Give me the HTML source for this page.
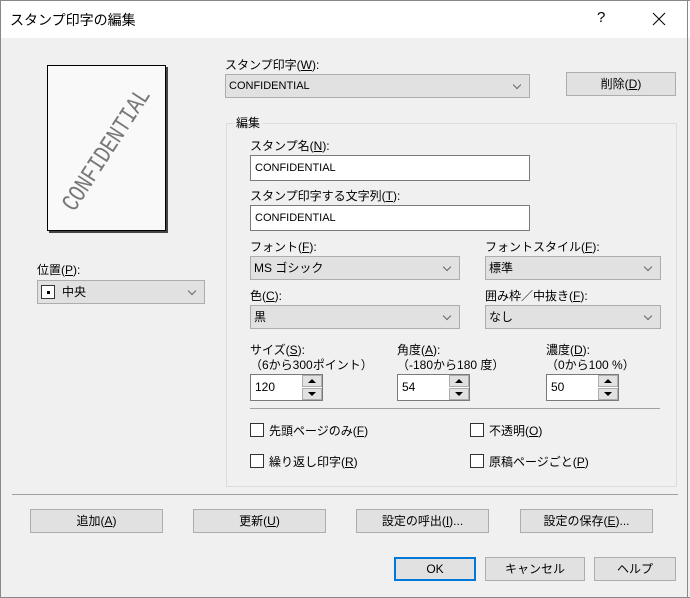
<!DOCTYPE html><html><head><meta charset="utf-8"><style>
*{margin:0;padding:0;box-sizing:border-box}
body{width:690px;height:598px;background:#f0f0f0;font-family:"Liberation Sans","Noto Sans CJK JP",sans-serif;font-size:12px;color:#000;position:relative;overflow:hidden}
.a{position:absolute;white-space:nowrap}
.lbl{position:absolute;white-space:nowrap;font-size:12px;line-height:14px}
.cb{position:absolute;background:#e1e1e1;border:1px solid #adadad;height:24px;line-height:22px;padding-left:3px;font-size:12px}
.cb:after{content:"";position:absolute;right:9px;top:7px;width:5px;height:5px;border-right:1px solid #666;border-bottom:1px solid #666;transform:rotate(45deg)}
.in{position:absolute;background:#fff;border:1px solid #7a7a7a;height:26px;line-height:24px;padding-left:4px;font-size:11px}
.btn{position:absolute;background:#e1e1e1;border:1px solid #adadad;height:24px;line-height:22px;text-align:center;font-size:12px}
.sp{position:absolute;background:#fff;border:1px solid #7a7a7a;width:73px;height:27px;line-height:25px;padding-left:4px;font-size:12px}
.sp i{position:absolute;right:0;width:20px;height:12px;background:#e1e1e1;border:1px solid #adadad}
.sp i:after{content:"";position:absolute;left:5px;border-left:4px solid transparent;border-right:4px solid transparent}
.sp i.u{top:0}.sp i.u:after{top:3px;border-bottom:4px solid #000}
.sp i.d{bottom:0}.sp i.d:after{top:3px;border-top:4px solid #000}
.ck{position:absolute;width:14px;height:14px;border:1px solid #333;background:#fff}
u{text-decoration:underline}
</style></head><body>
<div class="a" style="left:0;top:0;width:690px;height:38px;background:#fff;border-top:1px solid #888"></div>
<div class="a" style="left:0;top:0;width:1px;height:598px;background:#888"></div>
<div class="a" style="right:2px;top:0;width:1px;height:598px;background:#888"></div>
<div class="a" style="left:0;bottom:0;width:690px;height:1px;background:#888"></div>
<div class="a" style="left:10px;top:10px;font-size:14px">スタンプ印字の編集</div>
<div class="a" style="left:597px;top:9px;font-size:15px">?</div>
<svg class="a" style="left:652px;top:12px" width="14" height="14"><path d="M1 1L13 13M13 1L1 13" stroke="#000" stroke-width="1"/></svg>

<div class="a" style="left:47px;top:65px;width:119px;height:166px;background:#f9f9f9;border:1px solid #000;box-shadow:2px 2px 0 #444"></div>
<div class="a" style="left:107px;top:150px;transform:translate(-50%,-50%) rotate(-57deg) scaleX(0.78);font-family:'Liberation Mono',monospace;font-size:25px;color:#777;">CONFIDENTIAL</div>

<div class="lbl" style="left:37px;top:263px">位置(<u>P</u>):</div>
<div class="cb" style="left:37px;top:280px;width:168px;padding-left:24px">中央</div>
<div class="a" style="left:41px;top:285px;width:14px;height:14px;border:1px solid #333;background:#fff"><div style="position:absolute;left:5px;top:5px;width:3px;height:3px;background:#000"></div></div>

<div class="lbl" style="left:225px;top:58px">スタンプ印字(<u>W</u>):</div>
<div class="cb" style="left:225px;top:74px;width:305px;font-size:11px">CONFIDENTIAL</div>
<div class="btn" style="left:566px;top:72px;width:110px">削除(<u>D</u>)</div>

<div class="a" style="left:226px;top:123px;width:451px;height:364px;border:1px solid #dcdcdc"></div>
<div class="lbl" style="left:233px;top:116px;background:#f0f0f0;padding:0 3px">編集</div>

<div class="lbl" style="left:250px;top:139px">スタンプ名(<u>N</u>):</div>
<div class="in" style="left:250px;top:155px;width:280px">CONFIDENTIAL</div>
<div class="lbl" style="left:250px;top:189px">スタンプ印字する文字列(<u>T</u>):</div>
<div class="in" style="left:250px;top:205px;width:280px">CONFIDENTIAL</div>

<div class="lbl" style="left:250px;top:240px">フォント(<u>F</u>):</div>
<div class="cb" style="left:250px;top:256px;width:210px">MS ゴシック</div>
<div class="lbl" style="left:485px;top:240px">フォントスタイル(<u>F</u>):</div>
<div class="cb" style="left:485px;top:256px;width:176px">標準</div>
<div class="lbl" style="left:250px;top:289px">色(<u>C</u>):</div>
<div class="cb" style="left:250px;top:305px;width:210px">黒</div>
<div class="lbl" style="left:485px;top:289px">囲み枠／中抜き(<u>F</u>):</div>
<div class="cb" style="left:485px;top:305px;width:176px">なし</div>

<div class="lbl" style="left:250px;top:343px">サイズ(<u>S</u>):</div>
<div class="lbl" style="left:250px;top:358px">（6から300ポイント）</div>
<div class="sp" style="left:250px;top:374px">120<i class="u"></i><i class="d"></i></div>
<div class="lbl" style="left:397px;top:343px">角度(<u>A</u>):</div>
<div class="lbl" style="left:397px;top:358px">（-180から180 度）</div>
<div class="sp" style="left:397px;top:374px">54<i class="u"></i><i class="d"></i></div>
<div class="lbl" style="left:546px;top:343px">濃度(<u>D</u>):</div>
<div class="lbl" style="left:546px;top:358px">（0から100 %）</div>
<div class="sp" style="left:546px;top:374px">50<i class="u"></i><i class="d"></i></div>

<div class="a" style="left:250px;top:408px;width:410px;height:1px;background:#a0a0a0"></div>
<div class="ck" style="left:250px;top:423px"></div><div class="lbl" style="left:269px;top:424px">先頭ページのみ(<u>F</u>)</div>
<div class="ck" style="left:250px;top:454px"></div><div class="lbl" style="left:269px;top:455px">繰り返し印字(<u>R</u>)</div>
<div class="ck" style="left:470px;top:423px"></div><div class="lbl" style="left:489px;top:424px">不透明(<u>O</u>)</div>
<div class="ck" style="left:470px;top:454px"></div><div class="lbl" style="left:489px;top:455px">原稿ページごと(<u>P</u>)</div>

<div class="a" style="left:12px;top:494px;width:666px;height:1px;background:#a0a0a0"></div>
<div class="btn" style="left:30px;top:509px;width:133px">追加(<u>A</u>)</div>
<div class="btn" style="left:193px;top:509px;width:133px">更新(<u>U</u>)</div>
<div class="btn" style="left:356px;top:509px;width:133px">設定の呼出(<u>I</u>)...</div>
<div class="btn" style="left:520px;top:509px;width:133px">設定の保存(<u>E</u>)...</div>

<div class="btn" style="left:394px;top:557px;width:82px;border:2px solid #0078d7;line-height:20px">OK</div>
<div class="btn" style="left:485px;top:557px;width:100px">キャンセル</div>
<div class="btn" style="left:594px;top:557px;width:82px">ヘルプ</div>
</body></html>
